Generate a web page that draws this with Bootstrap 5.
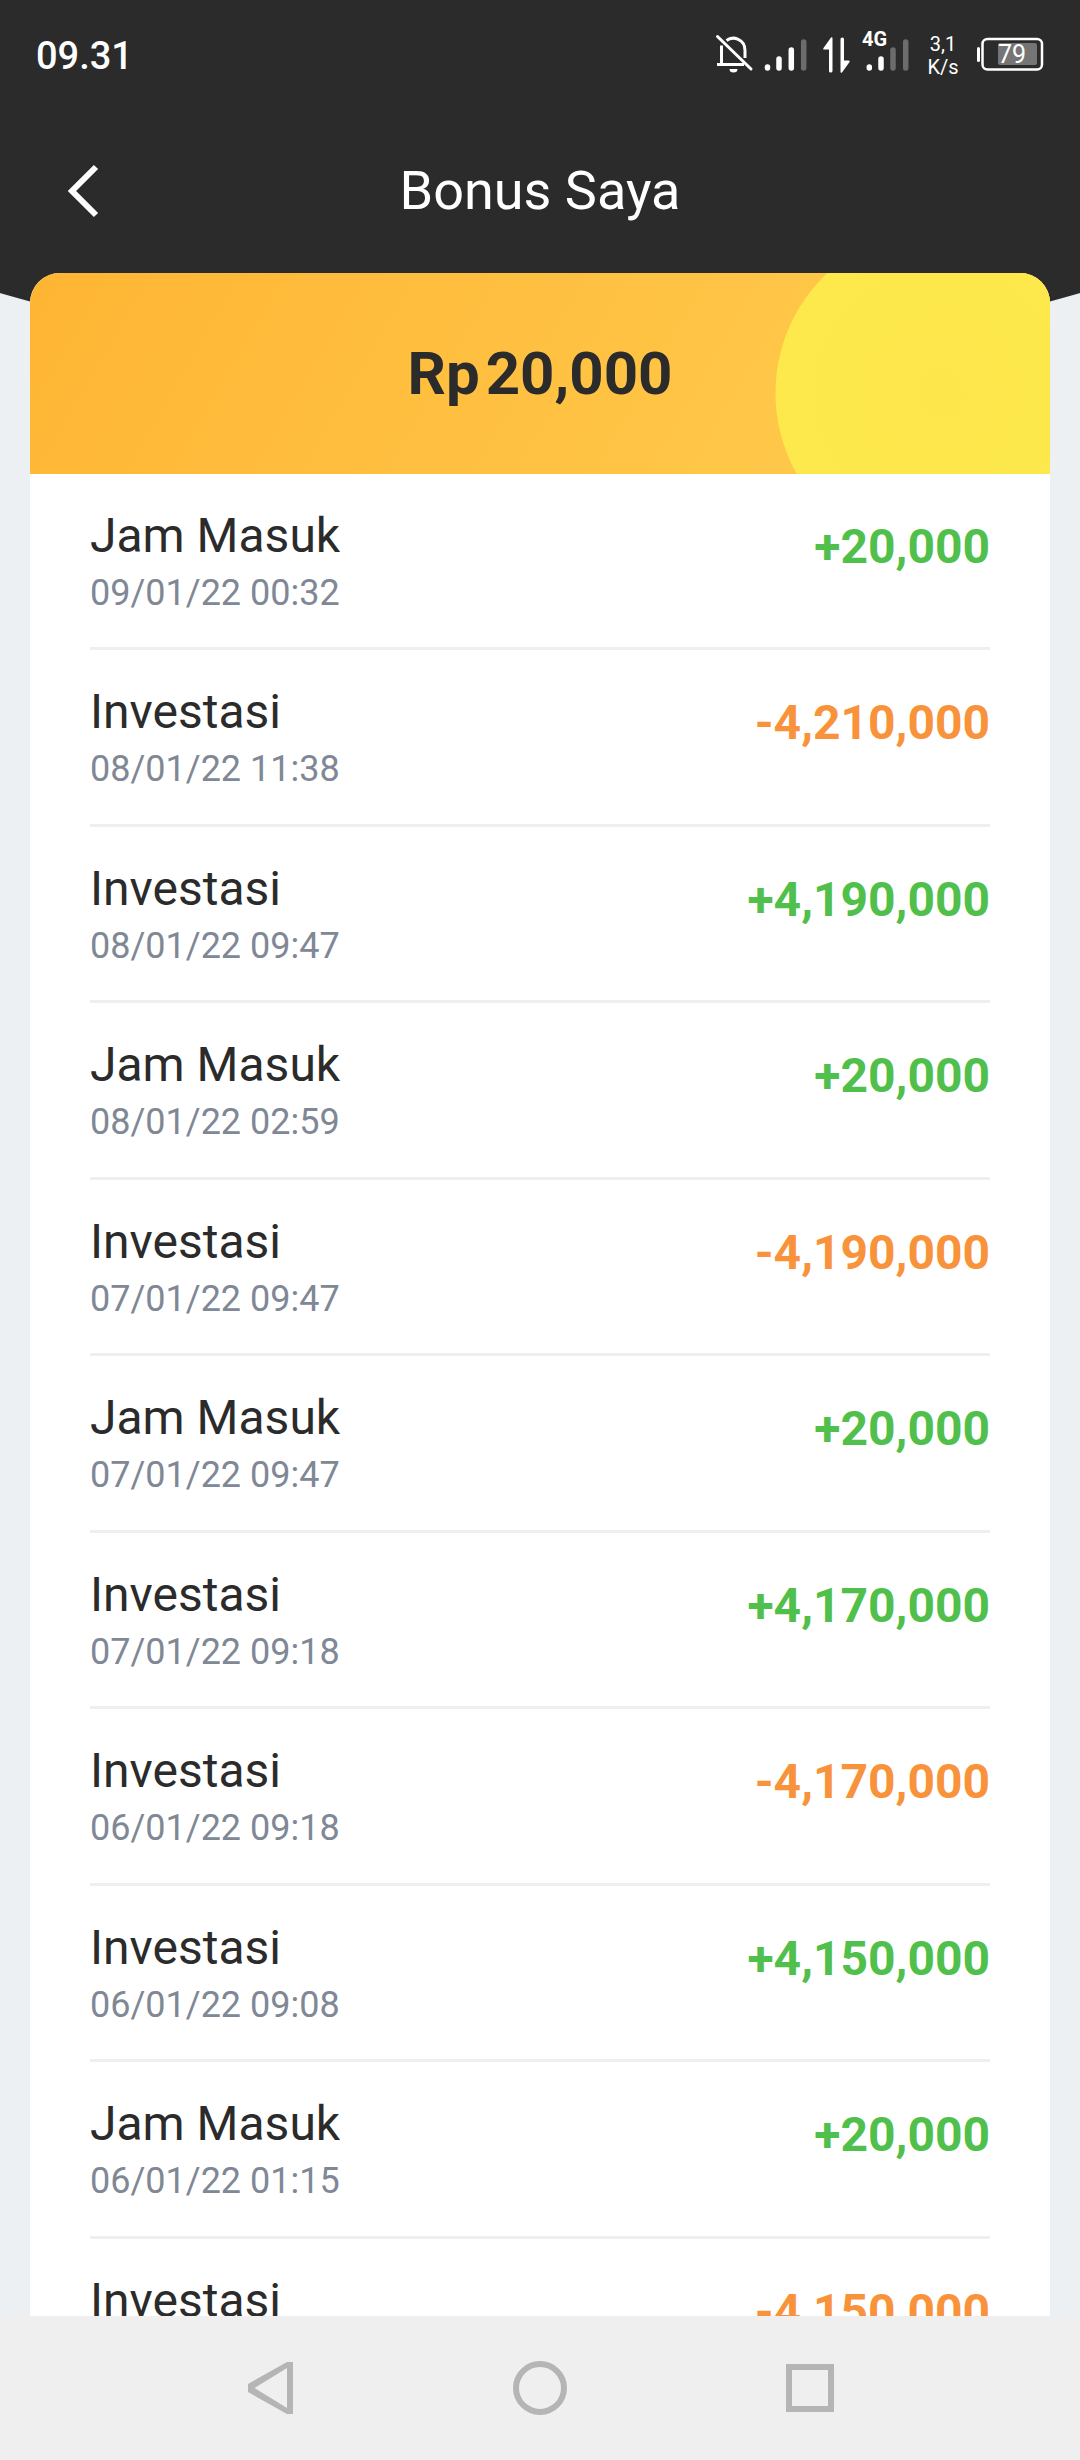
<!DOCTYPE html>
<html lang="id">
<head>
<meta charset="utf-8">
<meta name="viewport" content="width=device-width, initial-scale=1">
<title>Bonus Saya</title>
<link href="https://cdn.jsdelivr.net/npm/bootstrap@5.3.0/dist/css/bootstrap.min.css" rel="stylesheet">
<style>
  body { font-family: Roboto, "Noto Sans", sans-serif; color: #2b2b2b; }
  .screen {
    background: radial-gradient(circle at 50% -1576px, #2b2b2b 1945px, #ecf0f3 1946px);
  }
  .status-bar { height: 108px; padding: 0 36px; }
  .status-bar svg { overflow: visible; }
  .clock { font-size: 38px; line-height: 48px; font-weight: 500; padding-top: 4px; }
  .status-icons { gap: 12px; }
  .rate { width: 42px; font-size: 20px; line-height: 23px; padding-top: 4px; }
  .title-bar { height: 165px; padding: 0 54px; }
  .title-bar h1 { font-size: 54px; line-height: 64px; }
  .icon-button { width: 60px; height: 60px; }
  .bonus { margin: 0 30px; border-radius: 30px 30px 0 0; }
  .balance {
    height: 201px; font-size: 60px; line-height: 72px; gap: 6px;
    background:
      radial-gradient(circle at calc(100% - 110px) 120px, #fde64c 0, #fde94b 164px, transparent 165px),
      linear-gradient(120deg, #ffb534, #ffc84a 80%);
  }
  .history { padding: 0 60px; }
  .entry { padding: 34px 0 25px; border-bottom: 3px solid #eeeff0; }
  .entry:nth-child(even) { padding-bottom: 26px; }
  .entry-name { font-size: 48px; line-height: 56px; }
  .entry-time { font-size: 36px; line-height: 58px; color: #808795; }
  .amount { font-size: 48px; line-height: 56px; margin-top: 11px; }
  .amount-in { color: #51bf4b; }
  .amount-out { color: #f9933b; }
  .system-nav { height: 144px; background: #efefef; padding: 0 135px; }
  .system-nav .icon-button { flex: 1; }
</style>
<script src="https://cdn.jsdelivr.net/npm/bootstrap@5.3.0/dist/js/bootstrap.bundle.min.js"></script>
</head>
<body>
<div class="screen vh-100 d-flex flex-column overflow-hidden">
  <div class="status-bar d-flex align-items-center justify-content-between flex-shrink-0 text-white">
    <span class="clock">09.31</span>
    <div class="status-icons d-flex align-items-center">
      <svg width="36" height="44" fill="none" stroke="#fff" stroke-width="3" role="img" aria-label="Senyap">
        <path d="M1.500 4.500L35 37" stroke-linecap="round"/>
        <path d="M10.500 8.500C17 3.500 29 7 29 18.500V26M5.500 13.500V32M1 32.500H28"/>
        <path d="M13.500 37h8a4 3.500 0 0 1-8 0z" fill="#fff" stroke="none"/>
      </svg>
      <svg width="44" height="44" stroke="#fff" stroke-width="5.500" stroke-linecap="round" role="img" aria-label="Sinyal 1">
        <path d="M3.500 35v1M15 27v9M27.300 18v18"/>
        <path d="M39.700 10v26" stroke="#6c6c6c"/>
      </svg>
      <svg width="30" height="44" fill="#fff" role="img" aria-label="Data">
        <path d="M11 5.500q1.500-1 1.500 1V39q0 1.500-1.800 1.500T9 39V17.500H4.500q-2 0-1-1.500z"/>
        <path d="M22 40.500q-1.500 1-1.500-1V7q0-1.500 1.800-1.500T24 7v21.500h4.500q2 0 1 1.500z"/>
      </svg>
      <svg width="48" height="44" stroke="#fff" stroke-width="5.500" stroke-linecap="round" role="img" aria-label="Sinyal 2">
        <text x="0" y="14" fill="#fff" stroke="none" font-size="20" font-weight="700">4G</text>
        <path d="M7.300 35v1M19 27v9"/>
        <path d="M31 18v18M43.700 10v26" stroke="#6c6c6c"/>
      </svg>
      <span class="rate text-center">3,1<br>K/s</span>
      <svg width="68" height="44" role="img" aria-label="Baterai 79">
        <rect x="1" y="15" width="3" height="15" rx="1.500" fill="#fff"/>
        <rect x="6.500" y="7" width="59.500" height="30.500" rx="5" fill="none" stroke="#fff" stroke-width="2.500"/>
        <rect x="22" y="11" width="39" height="22" rx="2" fill="#757575"/>
        <text x="22" y="31" fill="#fff" font-size="25">79</text>
      </svg>
    </div>
  </div>

  <header class="title-bar d-flex align-items-center justify-content-between flex-shrink-0 text-white">
    <button type="button" class="icon-button btn p-0 border-0 d-flex align-items-center" aria-label="Kembali">
      <svg width="60" height="60" fill="none" stroke="#fff" stroke-width="6"><path d="M42 6L18 30l24 24"/></svg>
    </button>
    <h1 class="m-0 fw-normal">Bonus Saya</h1>
    <span class="icon-button"></span>
  </header>

  <main class="bonus bg-white flex-grow-1 overflow-hidden">
    <div class="balance d-flex align-items-center justify-content-center fw-bold"><span>Rp</span><span>20,000</span></div>
    <ul class="history list-unstyled m-0">
      <li class="entry d-flex justify-content-between"><div><div class="entry-name">Jam Masuk</div><div class="entry-time">09/01/22 00:32</div></div><span class="amount amount-in fw-bold">+20,000</span></li>
      <li class="entry d-flex justify-content-between"><div><div class="entry-name">Investasi</div><div class="entry-time">08/01/22 11:38</div></div><span class="amount amount-out fw-bold">-4,210,000</span></li>
      <li class="entry d-flex justify-content-between"><div><div class="entry-name">Investasi</div><div class="entry-time">08/01/22 09:47</div></div><span class="amount amount-in fw-bold">+4,190,000</span></li>
      <li class="entry d-flex justify-content-between"><div><div class="entry-name">Jam Masuk</div><div class="entry-time">08/01/22 02:59</div></div><span class="amount amount-in fw-bold">+20,000</span></li>
      <li class="entry d-flex justify-content-between"><div><div class="entry-name">Investasi</div><div class="entry-time">07/01/22 09:47</div></div><span class="amount amount-out fw-bold">-4,190,000</span></li>
      <li class="entry d-flex justify-content-between"><div><div class="entry-name">Jam Masuk</div><div class="entry-time">07/01/22 09:47</div></div><span class="amount amount-in fw-bold">+20,000</span></li>
      <li class="entry d-flex justify-content-between"><div><div class="entry-name">Investasi</div><div class="entry-time">07/01/22 09:18</div></div><span class="amount amount-in fw-bold">+4,170,000</span></li>
      <li class="entry d-flex justify-content-between"><div><div class="entry-name">Investasi</div><div class="entry-time">06/01/22 09:18</div></div><span class="amount amount-out fw-bold">-4,170,000</span></li>
      <li class="entry d-flex justify-content-between"><div><div class="entry-name">Investasi</div><div class="entry-time">06/01/22 09:08</div></div><span class="amount amount-in fw-bold">+4,150,000</span></li>
      <li class="entry d-flex justify-content-between"><div><div class="entry-name">Jam Masuk</div><div class="entry-time">06/01/22 01:15</div></div><span class="amount amount-in fw-bold">+20,000</span></li>
      <li class="entry d-flex justify-content-between"><div><div class="entry-name">Investasi</div></div><span class="amount amount-out fw-bold">-4,150,000</span></li>
    </ul>
  </main>

  <nav class="system-nav d-flex align-items-center flex-shrink-0" aria-label="Navigasi sistem">
    <button type="button" class="icon-button btn p-0 border-0 d-flex align-items-center justify-content-center" aria-label="Kembali">
      <svg width="60" height="60"><path fill="#b5b5b5" fill-rule="evenodd" d="M47 4h6v52h-6L8 34v-8zM47 10L14.500 30 47 50z"/></svg>
    </button>
    <button type="button" class="icon-button btn p-0 border-0 d-flex align-items-center justify-content-center" aria-label="Beranda">
      <svg width="60" height="60" fill="none" stroke="#b5b5b5" stroke-width="6"><circle cx="30" cy="30" r="24"/></svg>
    </button>
    <button type="button" class="icon-button btn p-0 border-0 d-flex align-items-center justify-content-center" aria-label="Aplikasi terbaru">
      <svg width="60" height="60" fill="none" stroke="#b5b5b5" stroke-width="6"><path d="M9 9h42v42H9z"/></svg>
    </button>
  </nav>
</div>
</body>
</html>
